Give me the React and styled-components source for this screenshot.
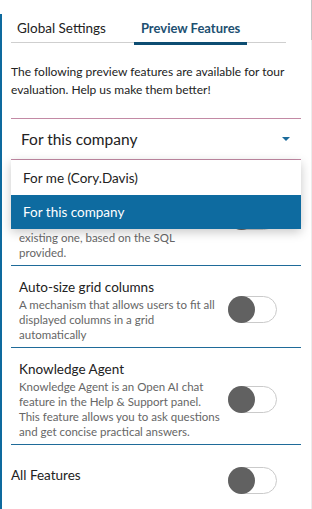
import styled, { createGlobalStyle } from "styled-components";

const GlobalStyle = createGlobalStyle`
  body {
    margin: 0;
    background: #fff;
    font-family: Lato, "Noto Sans", sans-serif;
    color: #222;
  }
`;

const Page = styled.div`
  position: relative;
  width: 312px;
  height: 509px;
  overflow: hidden;
  background: #fff;
`;

const Scrollbar = styled.div`
  position: absolute;
  top: 0;
  right: 0;
  width: 1px;
  height: 509px;
  background: #ececec;

  &::before {
    content: "";
    display: block;
    height: 40px;
    background: #c4c4c4;
  }
`;

const Panel = styled.div`
  margin-top: 14px;
  height: 495px;
  width: 290px;
  border-left: 2px solid #0e6a9e;
  padding-left: 9px;
`;

const Tabs = styled.div`
  display: flex;
  gap: 22px;
  width: 275px;
  height: 28px;
  border-bottom: 1px solid #cfcfcf;
`;

const Tab = styled.div`
  display: flex;
  align-items: center;
  padding: 0 ${(p) => (p.$active ? "7px" : "6px")};
  height: 28px;
  margin-bottom: -2px;
  font-size: ${(p) => (p.$active ? "13px" : "13.5px")};
  font-weight: ${(p) => (p.$active ? 700 : 400)};
  color: ${(p) => (p.$active ? "#1d5071" : "#222")};
  border-bottom: 3px solid ${(p) => (p.$active ? "#0d4d72" : "transparent")};
`;

const Intro = styled.p`
  margin: 20px 0 19px;
  font-size: 12px;
  line-height: 18px;
  color: #222;
`;

const Select = styled.div`
  display: flex;
  align-items: center;
  justify-content: space-between;
  height: 40px;
  padding: 0 11px 0 10px;
  border-top: 1px solid #c38aa5;
  border-bottom: 1px solid #c38aa5;
  font-size: 15.5px;
  color: #222;
`;

const Caret = styled.span`
  width: 0;
  height: 0;
  border-left: 4px solid transparent;
  border-right: 4px solid transparent;
  border-top: 4px solid #1b6b9b;
`;

const Body = styled.div`
  position: relative;
`;

const Menu = styled.ul`
  position: absolute;
  top: 0;
  left: 0;
  z-index: 2;
  width: 290px;
  margin: 0;
  padding: 0;
  list-style: none;
  background: #fff;
  box-shadow: 0 3px 10px rgba(0, 0, 0, 0.22);
`;

const Option = styled.li`
  display: flex;
  align-items: center;
  height: ${(p) => (p.$selected ? "34px" : "35px")};
  padding-left: 12px;
  font-size: 13.5px;
  color: ${(p) => (p.$selected ? "#fff" : "#222")};
  background: ${(p) => (p.$selected ? "#0e6ba0" : "#fff")};
`;

const Feature = styled.div`
  display: flex;
  align-items: center;
  justify-content: space-between;
  padding: ${(p) => p.$top || 11}px 24px 5px 8px;
  border-bottom: 1px solid #1f6b99;
`;

const Text = styled.div`
  flex: 1;
  min-width: 0;
`;

const Title = styled.div`
  font-size: 13.5px;
  line-height: 20px;
  color: #222;
`;

const Line = styled.div`
  font-size: 11.5px;
  line-height: 15px;
  white-space: nowrap;
  color: #666;
`;

const Footer = styled.div`
  display: flex;
  align-items: flex-start;
  justify-content: space-between;
  padding: 20px 24px 0 0;
  font-size: 13.5px;
  line-height: 20px;
  color: #222;
`;

const Track = styled.div`
  display: flex;
  align-items: center;
  flex: none;
  width: 47px;
  height: 25px;
  margin-top: ${(p) => p.$offset || 0}px;
  border: 1px solid #cacaca;
  border-radius: 14px;
  background: #fff;
`;

const Knob = styled.div`
  width: 27px;
  height: 27px;
  margin-left: -1px;
  border-radius: 50%;
  background: #616161;
`;

function Toggle({ offset }) {
  return (
    <Track $offset={offset}>
      <Knob />
    </Track>
  );
}

const features = [
  {
    title: "SQL data sources",
    lines: [
      "Allows users to create a new",
      "data source or update an",
      "existing one, based on the SQL",
      "provided.",
    ],
    top: 20,
    offset: -8,
  },
  {
    title: "Auto-size grid columns",
    lines: [
      "A mechanism that allows users to fit all",
      "displayed columns in a grid",
      "automatically",
    ],
  },
  {
    title: "Knowledge Agent",
    lines: [
      "Knowledge Agent is an Open AI chat",
      "feature in the Help & Support panel.",
      "This feature allows you to ask questions",
      "and get concise practical answers.",
    ],
  },
];

export default function App() {
  return (
    <Page>
      <GlobalStyle />
      <Scrollbar />
      <Panel>
        <Tabs>
          <Tab>Global Settings</Tab>
          <Tab $active>Preview Features</Tab>
        </Tabs>
        <Intro>
          The following preview features are available for tour evaluation.
          Help us make them better!
        </Intro>
        <Select>
          For this company
          <Caret />
        </Select>
        <Body>
          <Menu>
            <Option>For me (Cory.Davis)</Option>
            <Option $selected>For this company</Option>
          </Menu>
          {features.map((f) => (
            <Feature key={f.title} $top={f.top}>
              <Text>
                <Title>{f.title}</Title>
                {f.lines.map((l) => (
                  <Line key={l}>{l}</Line>
                ))}
              </Text>
              <Toggle offset={f.offset} />
            </Feature>
          ))}
          <Footer>
            All Features
            <Toggle offset={2} />
          </Footer>
        </Body>
      </Panel>
    </Page>
  );
}
